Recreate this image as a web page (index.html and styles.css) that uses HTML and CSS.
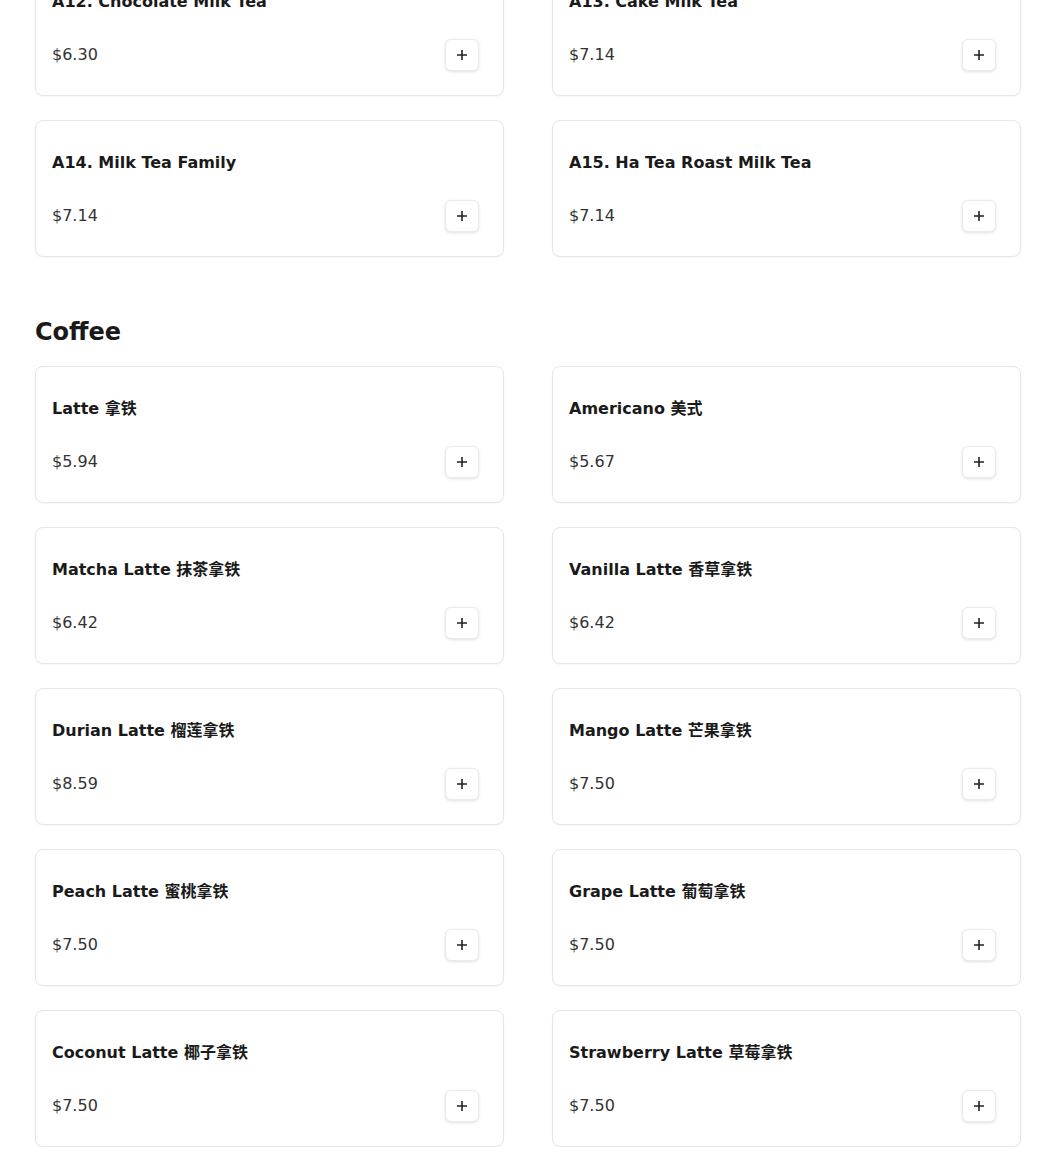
FILE: index.html
```html
<!DOCTYPE html>
<html lang="en">
<head>
<meta charset="utf-8">
<title>Menu</title>
<link rel="stylesheet" href="styles.css">
</head>
<body>
<main class="menu">
  <section class="section section-first">
    <div class="grid">
      <div class="card"><h3 class="name">A12. Chocolate Milk Tea</h3><div class="row"><span class="price">$6.30</span><button class="add" aria-label="Add"><svg viewBox="0 0 12 12" width="12" height="12"><path d="M6 1v10M1 6h10" stroke="#222" stroke-width="1.6" fill="none"/></svg></button></div></div>
      <div class="card"><h3 class="name">A13. Cake Milk Tea</h3><div class="row"><span class="price">$7.14</span><button class="add" aria-label="Add"><svg viewBox="0 0 12 12" width="12" height="12"><path d="M6 1v10M1 6h10" stroke="#222" stroke-width="1.6" fill="none"/></svg></button></div></div>
      <div class="card"><h3 class="name">A14. Milk Tea Family</h3><div class="row"><span class="price">$7.14</span><button class="add" aria-label="Add"><svg viewBox="0 0 12 12" width="12" height="12"><path d="M6 1v10M1 6h10" stroke="#222" stroke-width="1.6" fill="none"/></svg></button></div></div>
      <div class="card"><h3 class="name">A15. Ha Tea Roast Milk Tea</h3><div class="row"><span class="price">$7.14</span><button class="add" aria-label="Add"><svg viewBox="0 0 12 12" width="12" height="12"><path d="M6 1v10M1 6h10" stroke="#222" stroke-width="1.6" fill="none"/></svg></button></div></div>
    </div>
  </section>
  <section class="section">
    <h2 class="section-title">Coffee</h2>
    <div class="grid">
      <div class="card"><h3 class="name">Latte 拿铁</h3><div class="row"><span class="price">$5.94</span><button class="add" aria-label="Add"><svg viewBox="0 0 12 12" width="12" height="12"><path d="M6 1v10M1 6h10" stroke="#222" stroke-width="1.6" fill="none"/></svg></button></div></div>
      <div class="card"><h3 class="name">Americano 美式</h3><div class="row"><span class="price">$5.67</span><button class="add" aria-label="Add"><svg viewBox="0 0 12 12" width="12" height="12"><path d="M6 1v10M1 6h10" stroke="#222" stroke-width="1.6" fill="none"/></svg></button></div></div>
      <div class="card"><h3 class="name">Matcha Latte 抹茶拿铁</h3><div class="row"><span class="price">$6.42</span><button class="add" aria-label="Add"><svg viewBox="0 0 12 12" width="12" height="12"><path d="M6 1v10M1 6h10" stroke="#222" stroke-width="1.6" fill="none"/></svg></button></div></div>
      <div class="card"><h3 class="name">Vanilla Latte 香草拿铁</h3><div class="row"><span class="price">$6.42</span><button class="add" aria-label="Add"><svg viewBox="0 0 12 12" width="12" height="12"><path d="M6 1v10M1 6h10" stroke="#222" stroke-width="1.6" fill="none"/></svg></button></div></div>
      <div class="card"><h3 class="name">Durian Latte 榴莲拿铁</h3><div class="row"><span class="price">$8.59</span><button class="add" aria-label="Add"><svg viewBox="0 0 12 12" width="12" height="12"><path d="M6 1v10M1 6h10" stroke="#222" stroke-width="1.6" fill="none"/></svg></button></div></div>
      <div class="card"><h3 class="name">Mango Latte 芒果拿铁</h3><div class="row"><span class="price">$7.50</span><button class="add" aria-label="Add"><svg viewBox="0 0 12 12" width="12" height="12"><path d="M6 1v10M1 6h10" stroke="#222" stroke-width="1.6" fill="none"/></svg></button></div></div>
      <div class="card"><h3 class="name">Peach Latte 蜜桃拿铁</h3><div class="row"><span class="price">$7.50</span><button class="add" aria-label="Add"><svg viewBox="0 0 12 12" width="12" height="12"><path d="M6 1v10M1 6h10" stroke="#222" stroke-width="1.6" fill="none"/></svg></button></div></div>
      <div class="card"><h3 class="name">Grape Latte 葡萄拿铁</h3><div class="row"><span class="price">$7.50</span><button class="add" aria-label="Add"><svg viewBox="0 0 12 12" width="12" height="12"><path d="M6 1v10M1 6h10" stroke="#222" stroke-width="1.6" fill="none"/></svg></button></div></div>
      <div class="card"><h3 class="name">Coconut Latte 椰子拿铁</h3><div class="row"><span class="price">$7.50</span><button class="add" aria-label="Add"><svg viewBox="0 0 12 12" width="12" height="12"><path d="M6 1v10M1 6h10" stroke="#222" stroke-width="1.6" fill="none"/></svg></button></div></div>
      <div class="card"><h3 class="name">Strawberry Latte 草莓拿铁</h3><div class="row"><span class="price">$7.50</span><button class="add" aria-label="Add"><svg viewBox="0 0 12 12" width="12" height="12"><path d="M6 1v10M1 6h10" stroke="#222" stroke-width="1.6" fill="none"/></svg></button></div></div>
    </div>
  </section>
</main>
</body>
</html>
```
FILE: styles.css
```css
html, body {
  margin: 0;
  padding: 0;
  background: #ffffff;
  overflow: hidden;
}
body {
  font-family: "DejaVu Sans", "Noto Sans CJK SC", sans-serif;
  color: #1a1a1a;
}
.menu {
  width: 986px;
  padding-left: 35px;
  margin-top: -41px;
}
.section-first {
  margin-bottom: 59px;
}
.section-title {
  margin: 0 0 18px 0;
  font-size: 24px;
  line-height: 32px;
  font-weight: bold;
  color: #1a1a1a;
}
.grid {
  display: grid;
  grid-template-columns: 469px 469px;
  column-gap: 48px;
  row-gap: 24px;
}
.card {
  box-sizing: border-box;
  height: 137px;
  border: 1px solid #e6e6e6;
  border-radius: 8px;
  background: #fff;
  box-shadow: 0 1px 2px rgba(0, 0, 0, 0.04);
  padding: 30px 23px 23px 16px;
  display: flex;
  flex-direction: column;
}
.name {
  margin: 0;
  font-size: 16px;
  line-height: 24px;
  font-weight: bold;
  color: #1a1a1a;
  white-space: nowrap;
}
.row {
  margin-top: 25px;
  display: flex;
  align-items: center;
  justify-content: space-between;
  height: 32px;
}
.price {
  font-size: 16px;
  line-height: 20px;
  color: #333333;
}
.add {
  box-sizing: border-box;
  width: 34px;
  height: 32px;
  margin-right: 1px;
  padding: 0;
  border: 1px solid #ebebeb;
  border-radius: 6px;
  background: #ffffff;
  box-shadow: 0 1px 3px rgba(0, 0, 0, 0.12);
  display: flex;
  align-items: center;
  justify-content: center;
  cursor: pointer;
}
.add svg {
  display: block;
}
```
